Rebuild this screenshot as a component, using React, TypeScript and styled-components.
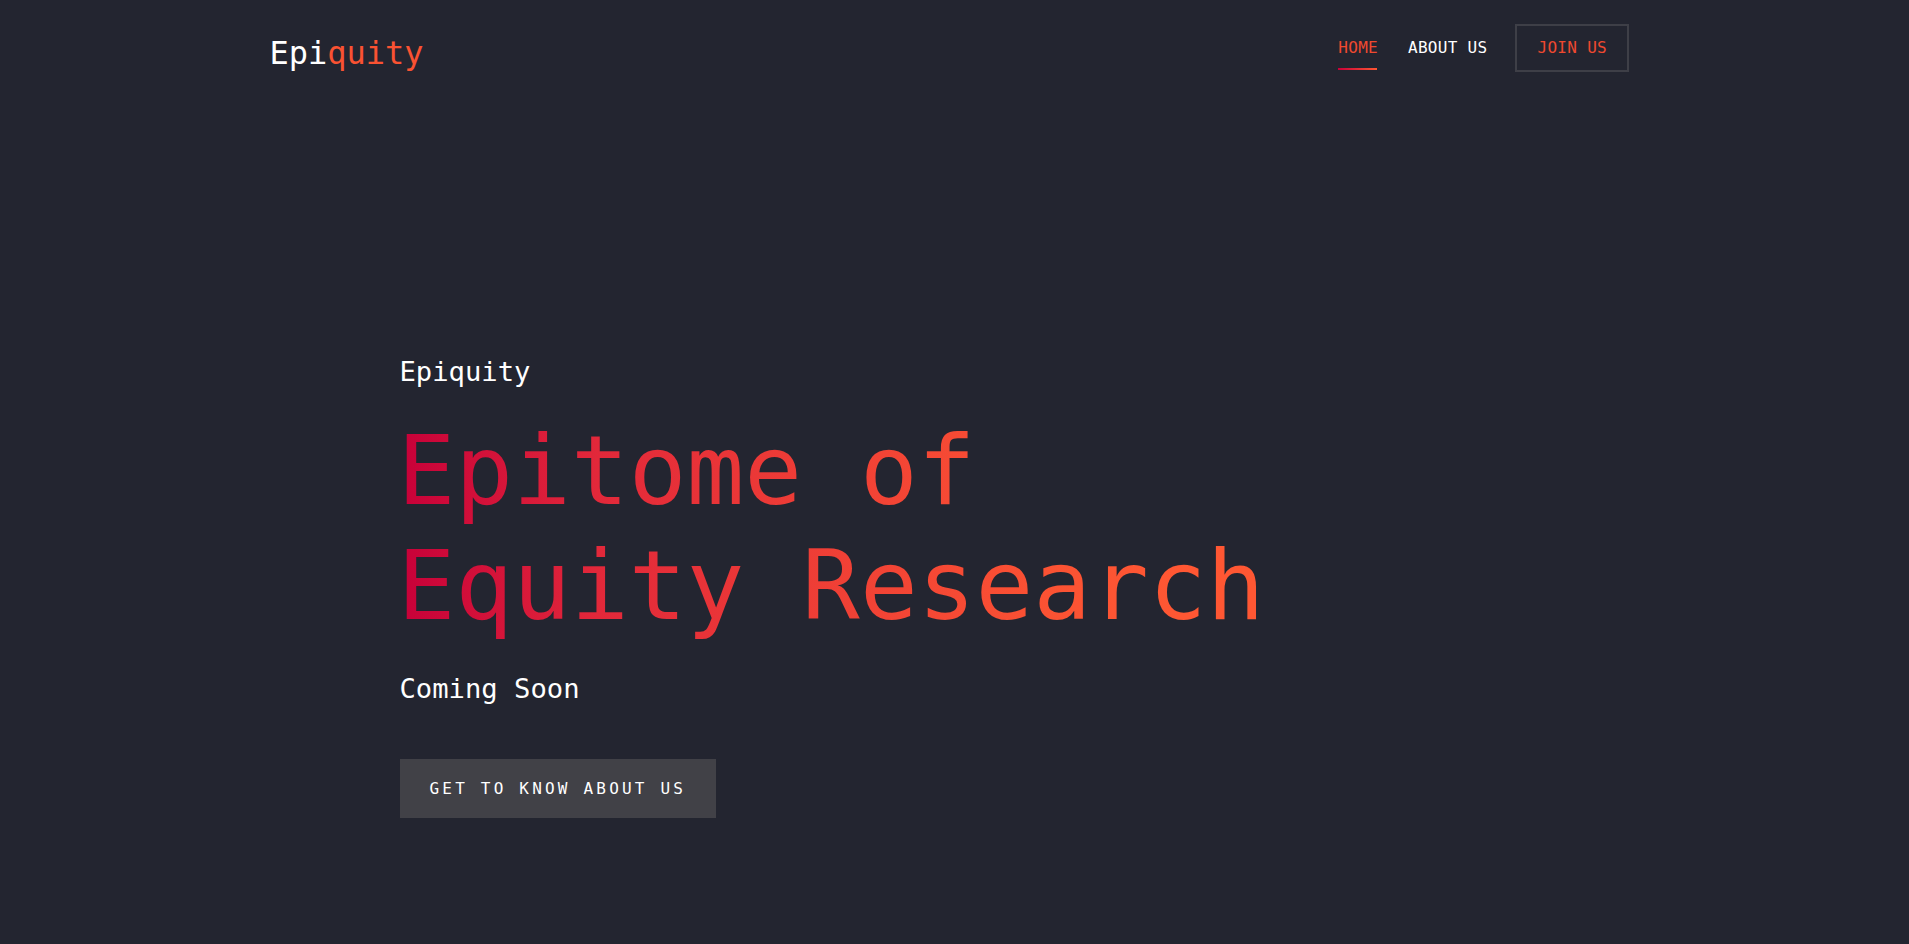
import React from "react";
import styled, { createGlobalStyle } from "styled-components";

const GlobalStyle = createGlobalStyle`
  html, body {
    margin: 0;
    padding: 0;
    background: #232530;
  }
  body {
    font-family: "DejaVu Sans Mono", "Liberation Mono", monospace;
    color: #ffffff;
    min-height: 100vh;
  }
  * { box-sizing: border-box; }
`;

const Page = styled.div`
  min-height: 100vh;
  background: #232530;
`;

const Header = styled.header`
  max-width: 1400px;
  margin: 0 auto;
  padding: 24px 25.5px 0 15px;
  display: flex;
  justify-content: space-between;
  align-items: flex-start;
`;

const Logo = styled.a`
  margin-top: 10px;
  font-size: 32px;
  line-height: 1.2;
  color: #ffffff;
  text-decoration: none;
`;

const LogoAccent = styled.span`
  color: #fa5232;
`;

const Nav = styled.nav`
  display: flex;
  align-items: center;
`;

const NavLink = styled.a<{ $active?: boolean; $gap: number }>`
  position: relative;
  display: block;
  margin-left: ${(p) => p.$gap}px;
  padding: 14px 0;
  font-size: 16px;
  line-height: 20px;
  letter-spacing: 0.3px;
  color: ${(p) => (p.$active ? "#f0492f" : "#ffffff")};
  text-decoration: none;
  &::after {
    content: "";
    display: ${(p) => (p.$active ? "block" : "none")};
    position: absolute;
    left: 0;
    right: 1px;
    bottom: 2px;
    height: 2px;
    background: linear-gradient(to right, #c70039, #ff5733);
  }
`;

const JoinButton = styled.a`
  display: block;
  margin-left: 28px;
  padding: 12px 20px;
  border: 2px solid #3e3f47;
  font-size: 16px;
  line-height: 20px;
  letter-spacing: 0.3px;
  color: #f0492f;
  text-decoration: none;
`;

const Hero = styled.section`
  max-width: 1140px;
  margin: 0 auto;
  padding: 284px 15px 0;
  display: flex;
  flex-direction: column;
  align-items: flex-start;
`;

const Kicker = styled.p`
  margin: 0 0 25px;
  font-size: 27.2px;
  line-height: 1.2;
  color: #ffffff;
`;

const Title = styled.h1`
  margin: 0 0 0 -2px;
  font-size: 96px;
  font-weight: 400;
  line-height: 1.2;
  background: linear-gradient(
    to right,
    #c70039 0%,
    #e2283a 23%,
    #ee3d36 47%,
    #fb5233 75%,
    #ff5733 90%
  );
  -webkit-background-clip: text;
  background-clip: text;
  color: transparent;
`;

const Tagline = styled.p`
  margin: 29px 0 53px;
  font-size: 27.2px;
  line-height: 1.2;
  color: #ffffff;
`;

const CtaButton = styled.a`
  display: block;
  padding: 20px 30px;
  background: #414147;
  font-size: 16px;
  line-height: 19px;
  letter-spacing: 3.2px;
  color: #ffffff;
  text-decoration: none;
  text-transform: uppercase;
`;

export default function App() {
  return (
    <Page>
      <GlobalStyle />
      <Header>
        <Logo href="#">
          Epi<LogoAccent>quity</LogoAccent>
        </Logo>
        <Nav>
          <NavLink href="#" $active $gap={0}>
            HOME
          </NavLink>
          <NavLink href="#" $gap={30}>
            ABOUT US
          </NavLink>
          <JoinButton href="#">JOIN US</JoinButton>
        </Nav>
      </Header>
      <Hero>
        <Kicker>Epiquity</Kicker>
        <Title>
          Epitome of
          <br />
          Equity Research
        </Title>
        <Tagline>Coming Soon</Tagline>
        <CtaButton href="#">Get to know about us</CtaButton>
      </Hero>
    </Page>
  );
}
